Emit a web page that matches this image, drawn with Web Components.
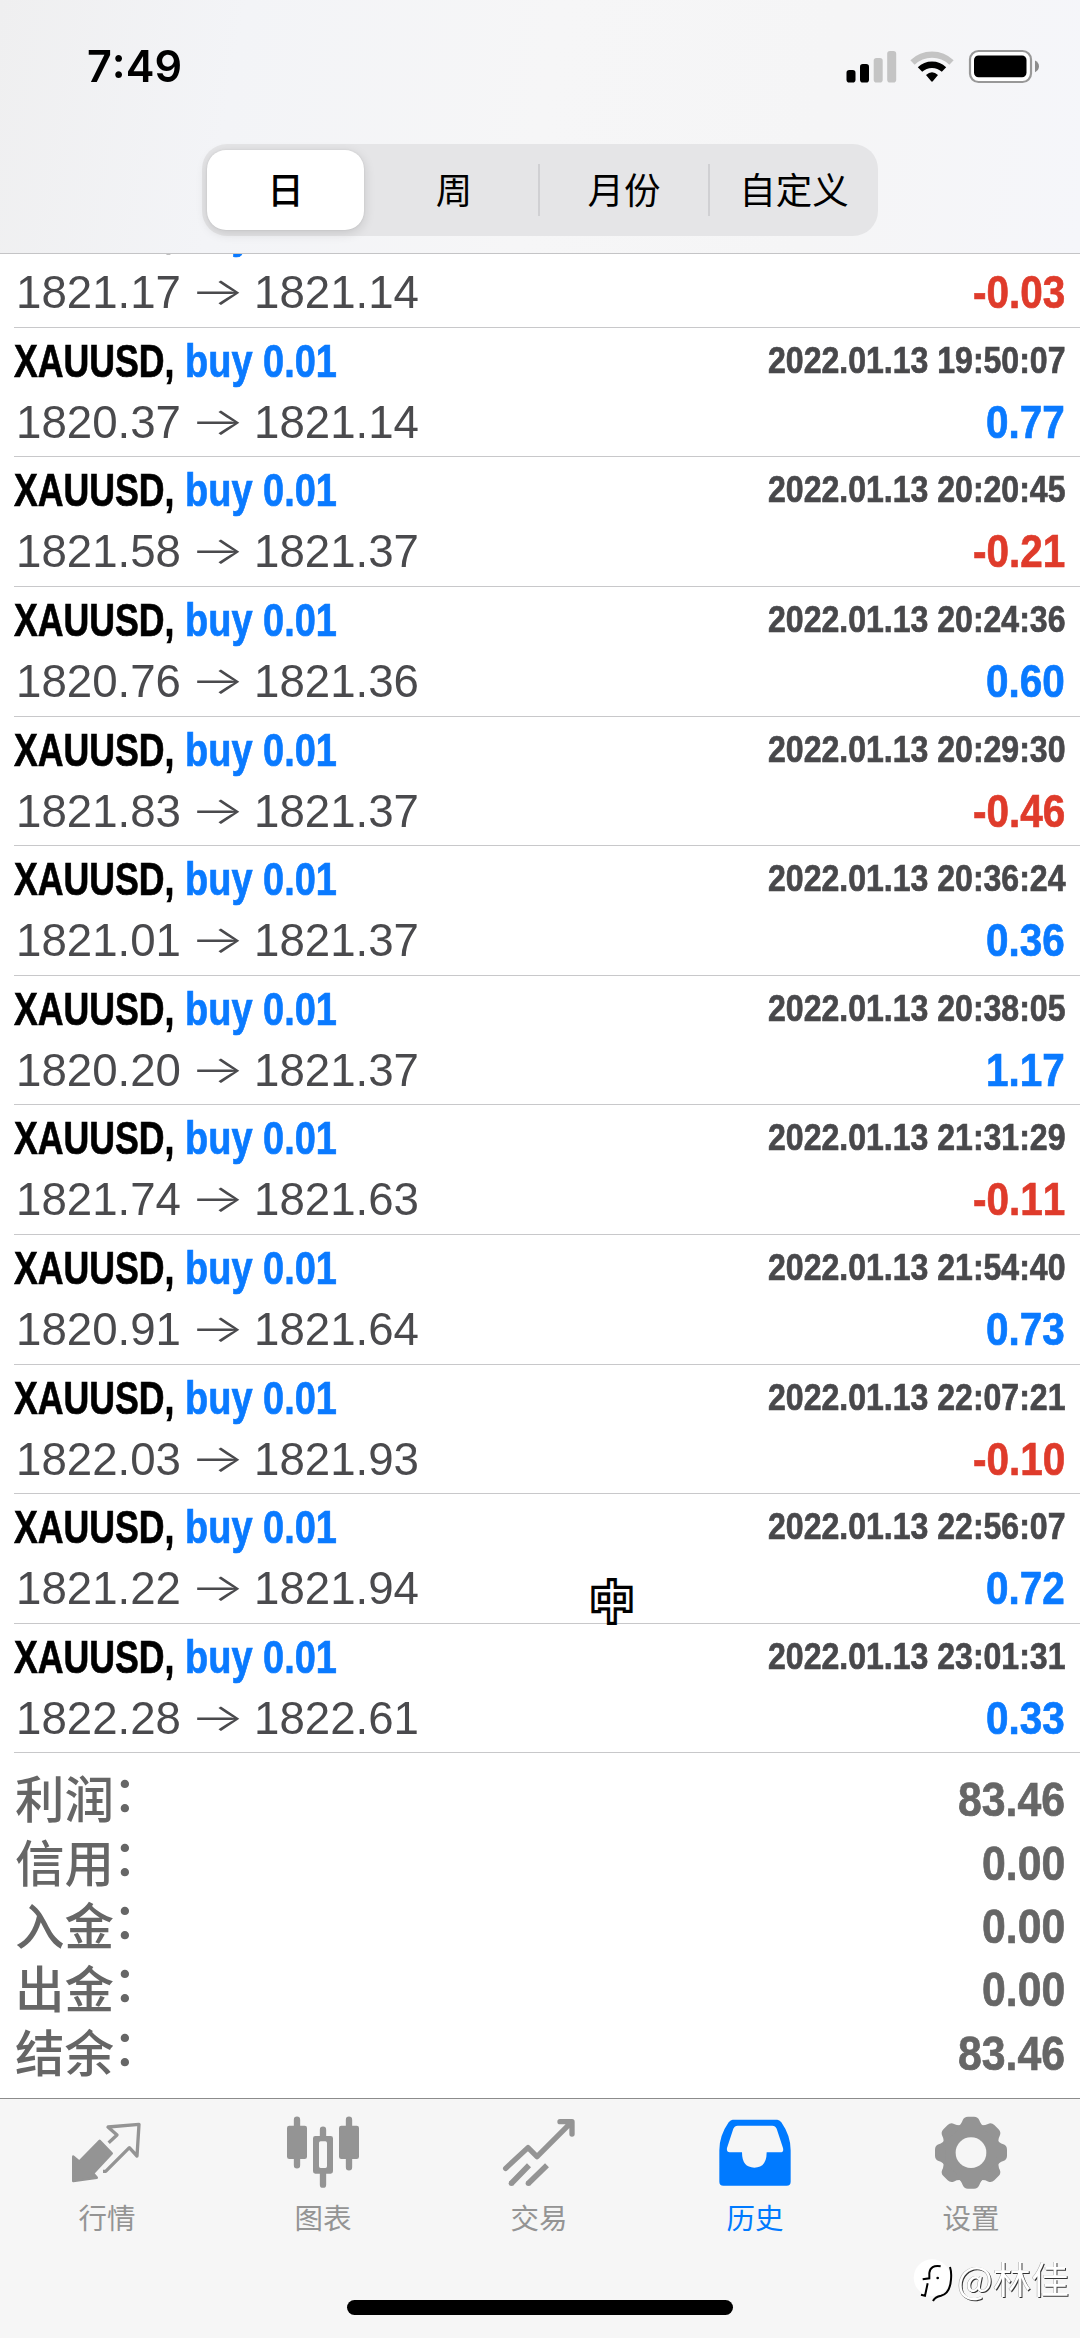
<!DOCTYPE html>
<html lang="zh-CN">
<head>
<meta charset="utf-8">
<title>历史</title>
<style>
html,body{margin:0;padding:0;background:#fff}
body{width:1080px;height:2338px;overflow:hidden;font-family:"Liberation Sans","Noto Sans CJK SC",sans-serif}
</style>
</head>
<body>
<history-app></history-app>
<script>
const define = (name, html, setup) => customElements.define(name, class extends HTMLElement {
  connectedCallback() {
    if (this.shadowRoot) return;
    this.attachShadow({mode: 'open'}).innerHTML = typeof html === 'function' ? html(this) : html;
    if (setup) setup(this, this.shadowRoot);
  }
});

// Condensed text: squeezes its content to a width (w) or by a factor (k).
define('fit-text', `<style>
:host{display:inline-block;white-space:nowrap;font-kerning:none}
span{display:inline-block;transform-origin:0 50%}
</style><span><slot></slot></span>`, (el, root) => {
  const s = root.querySelector('span');
  const n = s.getBoundingClientRect().width;
  const w = el.hasAttribute('w') ? +el.getAttribute('w') : n * +el.getAttribute('k');
  s.style.transform = `scaleX(${w / n})`;
  el.style.width = w + 'px';
});

define('status-bar', `<style>
:host{display:flex;justify-content:space-between;align-items:flex-start;height:144px;box-sizing:border-box;padding:41px 38px 0 87px}
.t{font:600 43.5px/51px Inter,sans-serif;color:#000}
svg{display:block;margin-top:5px}
</style>
<div class="t"><fit-text w="95">7:49</fit-text></div>
<svg width="200" height="42" viewBox="842 46 200 42">
<rect x="846.5" y="70" width="9" height="12.5" rx="2.8"/><rect x="860" y="64" width="9" height="18.500" rx="2.8"/>
<rect x="873.700" y="58" width="9" height="24.500" rx="2.8" fill="#c4c4c4"/><rect x="887.200" y="51" width="9" height="31.500" rx="2.8" fill="#c4c4c4"/>
<path d="M912.500 62.500A28 28 0 0 1 951.500 62.500" fill="none" stroke="#c4c4c4" stroke-width="6.200"/>
<path d="M920 69.500A17.500 17.500 0 0 1 944 69.500" fill="none" stroke="#000" stroke-width="6.400"/>
<path d="M926 75Q932 69.500 938 75L933 81Q932 82.300 931 81Z"/>
<rect x="970" y="51" width="61" height="31" rx="8.500" fill="#fff" stroke="#989898" stroke-width="2.200"/>
<rect x="974" y="55.500" width="52.500" height="21.800" rx="4.500"/>
<path d="M1035 60.500Q1039 62.500 1039 66.300Q1039 70.300 1035 72.200Z" fill="#8c8c8c"/>
</svg>`);

define('seg-item', `<style>
:host{display:flex;flex:1;align-items:center;justify-content:center;height:80px;border-radius:19px;box-sizing:border-box;font:400 36.5px/50px "Noto Sans CJK SC",sans-serif;color:#000;padding-bottom:1.500px}
:host([on]){background:#fff;box-shadow:0 3px 12px rgba(0,0,0,.14),0 0 2px rgba(0,0,0,.1);font-weight:500}
</style><slot></slot>`);

define('seg-control', `<style>
:host{display:flex;align-items:center;box-sizing:border-box;width:676px;height:92px;margin:0 auto;background:#e5e5e7;border-radius:25px;padding:0 0 0 5px}
i{width:2px;height:52px;background:#d0d0d3}
seg-item{flex:1 1 0}
seg-item[on]{flex:0 0 157px;margin-right:6px}
</style>
<seg-item on>日</seg-item><seg-item>周</seg-item><i></i><seg-item>月份</seg-item><i></i><seg-item>自定义</seg-item>`);

define('top-bar', `<style>
:host{display:block;height:254px;box-sizing:border-box;border-bottom:1.500px solid #c4c4c6;background:linear-gradient(100deg,#efeff0 0%,#f3f4f7 22%,#f6f6f7 50%,#f5f5f6 75%,#f5f6fa 100%)}
</style><status-bar></status-bar><seg-control></seg-control>`);

define('deal-row', el => {
  const [open, close, time, profit] = el.dataset.v.split('|');
  return `<style>
:host{display:flex;flex-direction:column;gap:5px;box-sizing:border-box;height:129.590px;flex:none;margin-left:14px;padding:5px 15px 0 0;border-bottom:1.300px solid #c8c8ca}
div{display:flex;justify-content:space-between;align-items:flex-start;height:56px;line-height:56px;font-size:46px;white-space:nowrap}
b{color:#000}.buy{color:#0a7aff;margin-left:10px}
b,.time,.p{-webkit-text-stroke:.7px currentColor}
.time{font:bold 37.500px/55.500px "Liberation Sans";color:#48484b}
.price{display:flex;color:#4a4a4d;padding-left:1.500px}
.a{font:300 39px/54px Inter,sans-serif;margin:0 9px}
.p{font-weight:bold;color:${profit[0] === '-' ? '#df3b2b' : '#0a7aff'}}
</style>
<div><span><b><fit-text w="160.500">XAUUSD,</fit-text></b><b class="buy"><fit-text w="152">buy 0.01</fit-text></b></span><span class="time"><fit-text w="297.500">${time}</fit-text></span></div>
<div><span class="price"><fit-text w="165">${open}</fit-text><span class="a"><fit-text w="55">→</fit-text></span><fit-text w="165">${close}</fit-text></span><span class="p"><fit-text k="0.88">${profit}</fit-text></span></div>`;
});

define('sum-row', el => `<style>
:host{display:flex;justify-content:space-between;align-items:flex-start;height:63.400px;color:#666}
.l{font:500 49.500px/57px "Noto Sans CJK SC",sans-serif;display:flex}
.c{transform:translate(-1.500px,-6px)}
.v{font:bold 49px/63.400px "Liberation Sans";-webkit-text-stroke:.7px currentColor}
</style><span class="l"><slot></slot><span class="c">：</span></span><span class="v"><fit-text k="0.873">${el.dataset.v}</fit-text></span>`);

define('ime-cursor', `<style>
:host{position:absolute;left:588px;top:1567px;width:48px;text-align:center;font:400 43px/65px "Noto Sans CJK SC",sans-serif;color:#fff;-webkit-text-stroke:6.500px #000;paint-order:stroke fill}
</style><slot></slot>`);

const deals = [
  '1821.17|1821.14|2022.01.13 19:49:20|-0.03',
  '1820.37|1821.14|2022.01.13 19:50:07|0.77',
  '1821.58|1821.37|2022.01.13 20:20:45|-0.21',
  '1820.76|1821.36|2022.01.13 20:24:36|0.60',
  '1821.83|1821.37|2022.01.13 20:29:30|-0.46',
  '1821.01|1821.37|2022.01.13 20:36:24|0.36',
  '1820.20|1821.37|2022.01.13 20:38:05|1.17',
  '1821.74|1821.63|2022.01.13 21:31:29|-0.11',
  '1820.91|1821.64|2022.01.13 21:54:40|0.73',
  '1822.03|1821.93|2022.01.13 22:07:21|-0.10',
  '1821.22|1821.94|2022.01.13 22:56:07|0.72',
  '1822.28|1822.61|2022.01.13 23:01:31|0.33'];
const sums = [['利润', '83.46'], ['信用', '0.00'], ['入金', '0.00'], ['出金', '0.00'], ['结余', '83.46']];

define('deal-list', `<style>
:host{display:flex;flex-direction:column;justify-content:flex-start;height:1844px;overflow:hidden;background:#fff}
.rows{display:flex;flex-direction:column;margin-top:-55.700px}
.sum{padding:15px 15px 0 15px}
</style>
<div class="rows">${deals.map(d => `<deal-row data-v="${d}"></deal-row>`).join('')}</div>
<div class="sum">${sums.map(s => `<sum-row data-v="${s[1]}">${s[0]}</sum-row>`).join('')}</div>`);

const tooth = 'M-42-76Q-29-84-25-97Q-21-108-9-108H9Q21-108 25-97Q29-84 42-76Z';
const icons = {
  quotes: ['204 100', `<path stroke="currentColor" stroke-width="8" stroke-linejoin="round" d="M220 231L238 246L299 184L335 221L279 281L290 294L220 304Z"/><path fill="none" stroke="currentColor" stroke-width="10" stroke-linejoin="round" d="M326 189L351 166L324 142L417 134L411 229L388 204L317 275H309"/>`],
  chart: ['852 100', `<g fill="none" stroke="currentColor" stroke-width="19" stroke-linecap="round"><path d="M891 120V257M1047 120V263M969 150V172M969 280V315"/></g><rect x="861" y="138" width="60" height="100" rx="7"/><rect x="1017" y="138" width="60" height="100" rx="7"/><path fill-rule="evenodd" d="M946 169H992Q999 169 999 176V275Q999 282 992 282H946Q939 282 939 275V176Q939 169 946 169ZM962 185Q957 185 957 190V260Q957 265 962 265H976Q981 265 981 260V190Q981 185 976 185Z"/>`],
  trade: ['300 100', `<g fill="none" stroke="currentColor" stroke-width="16" stroke-linecap="round" stroke-linejoin="round"><path d="M317 266L384 204L411 231L513 129M480 126H516V163"/></g><path fill="none" stroke="currentColor" stroke-width="17" d="M333 312L387 257M384 312L441 257"/><circle cx="334" cy="311" r="8"/><circle cx="385" cy="311" r="8"/>`],
  history: ['948 100', `<path fill-rule="evenodd" d="M998 120H1132Q1138 120 1144 128Q1172 168 1172 212V306Q1172 318 1160 318H970Q958 318 958 306V212Q958 168 986 128Q992 120 998 120ZM1013 138Q1004 138 1000 147L981 205Q979 218 989 218H1026Q1026 264 1063 264Q1100 264 1100 218H1141Q1152 218 1149 205L1130 147Q1126 138 1117 138Z"/>`],
  settings: ['456 100', `<mask id="m" maskUnits="userSpaceOnUse" x="440" y="90" width="280" height="260"><rect x="440" y="90" width="280" height="260" fill="#fff"/><circle cx="573" cy="219" r="46" fill="#000"/></mask><g mask="url(#m)"><circle cx="573" cy="219" r="86"/>${[0,1,2,3,4,5,6,7].map(i => `<path transform="translate(573 219) rotate(${i * 45})" d="${tooth}"/>`).join('')}</g>`]
};

define('tab-item', el => {
  const [origin, body] = icons[el.getAttribute('icon')];
  return `<style>
:host{display:flex;flex:1;flex-direction:column;align-items:center;color:#949494}
:host([on]){color:#007aff}
svg{display:block}
span{font:400 28.500px/36px "Noto Sans CJK SC",sans-serif;margin-top:6px;padding-right:2px}
</style><svg width="80" height="80" viewBox="${origin} 240 240" fill="currentColor">${body}</svg><span><slot></slot></span>`;
});

define('water-mark', `<style>
:host{position:absolute;left:913px;top:2248px;display:flex;align-items:center}
span{font:400 37px/50px "Noto Sans CJK SC",sans-serif;color:#fff;text-shadow:1px 1px .5px #333,-.5px 0 .5px #999}
svg{display:block;margin-top:9px}
</style><svg width="44" height="50" viewBox="400 530 132 150"><circle cx="457" cy="592" r="55" fill="#fff"/><g fill="none" stroke="#000" stroke-width="6"><path d="M483 558Q452 553 449 578V594L429 597M444 609L436 646L424 643"/><path d="M511 560Q516 575 514 597Q511 640 484 646Q466 649 460 662"/></g><circle cx="474" cy="593" r="4"/></svg><span><fit-text w="112"><slot></slot></fit-text></span>`);

define('tab-bar', `<style>
:host{display:flex;flex-direction:column;height:240px;box-sizing:border-box;background:#f6f6f6;border-top:1.300px solid #8c8c8c;padding-top:14.300px}
nav{display:flex}
.home{width:386px;height:14.500px;border-radius:8px;background:#000;margin:65px auto 0}
</style><nav><tab-item icon="quotes">行情</tab-item><tab-item icon="chart">图表</tab-item><tab-item icon="trade">交易</tab-item><tab-item icon="history" on>历史</tab-item><tab-item icon="settings">设置</tab-item></nav><div class="home"></div>`);

define('history-app', `<style>
:host{display:flex;flex-direction:column;position:relative;width:1080px;height:2338px;overflow:hidden}
</style><top-bar></top-bar><deal-list></deal-list><tab-bar></tab-bar><ime-cursor>中</ime-cursor><water-mark>@林佳</water-mark>`);
</script>
</body>
</html>
